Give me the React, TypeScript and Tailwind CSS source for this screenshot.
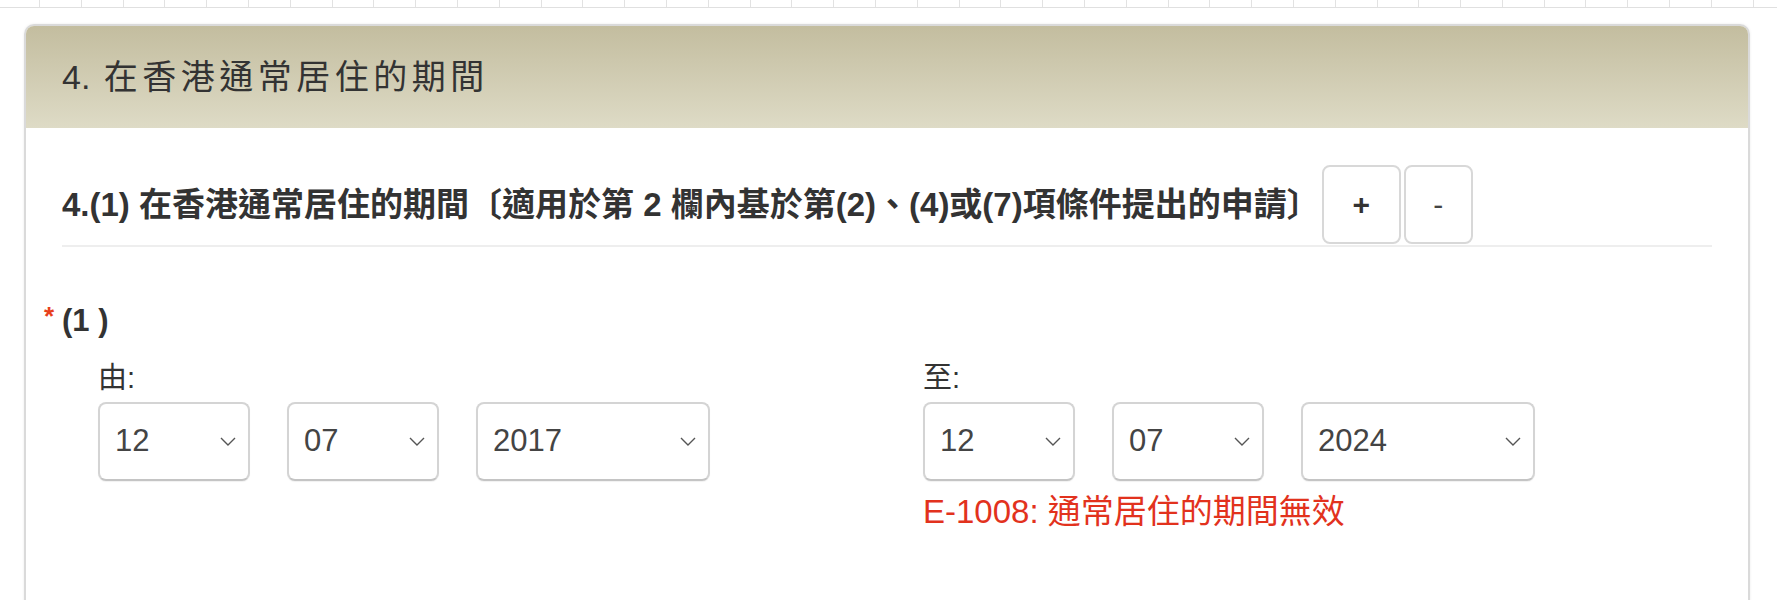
const FONT = "font-['Liberation_Sans','Noto_Sans_CJK_TC',sans-serif]";

interface DateSelectProps {
	value: string;
	width: string;
}

function DateSelect({ value, width }: DateSelectProps) {
	return (
		<div
			className={`${width} h-[79px] flex items-center justify-between pl-[15px] pr-[12px] border-2 border-[#d4d4d4] border-b-[#c4c4c4] rounded-[8px] bg-white shadow-[0_1px_1px_rgba(0,0,0,0.06)]`}
		>
			<span className="text-[31px] text-[#444]">{value}</span>
			<svg width="16" height="9" viewBox="0 0 16 9" className="text-[#555]">
				<path d="M1 1l7 7 7-7" fill="none" stroke="currentColor" strokeWidth="1.4" />
			</svg>
		</div>
	);
}

interface DateGroupProps {
	label: string;
	day: string;
	month: string;
	year: string;
	error?: string;
}

function DateGroup({ label, day, month, year, error }: DateGroupProps) {
	return (
		<div className="pl-[36px]">
			<div className="text-[29px] leading-[34px] text-[#333]">{label}</div>
			<div className="flex gap-[37px] mt-[7px]">
				<DateSelect value={day} width="w-[152px]" />
				<DateSelect value={month} width="w-[152px]" />
				<DateSelect value={year} width="w-[234px]" />
			</div>
			{error && (
				<p className="mt-[11px] text-[33px] leading-[40px] text-[#e2321d]">{error}</p>
			)}
		</div>
	);
}

export default function App() {
	// 頂部表格殘留的一行
	const cells = Array.from({ length: 43 }, (_, i) => i);

	return (
		<div className={`w-[1777px] h-[600px] overflow-hidden bg-white ${FONT}`}>
			<div className="flex h-[8px] border-b border-[#e0e0e0]">
				{cells.map((i) => (
					<div
						key={i}
						className={`flex-none h-full border-r border-[#e2e2e2] ${i === 0 ? "w-[40px]" : "w-[41.8px]"}`}
					/>
				))}
			</div>

			<div className="ml-[24px] mr-[27px] mt-[16px] rounded-t-[10px] border-2 border-b-0 border-[#dadada] shadow-[0_0_3px_rgba(0,0,0,0.08)] h-[600px]">
				{/* 標題列 */}
				<div className="h-[102px] flex items-center pl-[36px] pt-[1px] rounded-t-[8px] bg-gradient-to-b from-[#c3bd9f] to-[#dedbc6]">
					<h2 className="text-[34px] text-[#333]">
						4.&nbsp;<span className="ml-[4px] tracking-[4.5px]">在香港通常居住的期間</span>
					</h2>
				</div>

				{/* 內容 */}
				<div className="px-[36px]">
					<div className="flex items-center pt-[37px] pb-[1px] border-b-2 border-[#eeeeee]">
						<h3 className="font-bold text-[33px] text-[#333]">
							4.(1) 在香港通常居住的期間〔適用於第 2 欄內基於第(2)、(4)或(7)項條件提出的申請〕
						</h3>
						<div className="flex gap-[3px] ml-[2px]">
							<button className="w-[79px] h-[79px] border-2 border-[#d8d8d8] rounded-[8px] bg-white text-[30px] font-bold text-[#333]">
								+
							</button>
							<button className="w-[69px] h-[79px] border-2 border-[#d8d8d8] rounded-[8px] bg-white text-[30px] text-[#444]">
								-
							</button>
						</div>
					</div>

					<div className="mt-[56px] -ml-[18px] flex items-start leading-[36px]">
						<span className="w-[18px] text-[26px] leading-[26px] font-bold text-[#e8401c]">*</span>
						<span className="font-bold text-[31px] text-[#333]">(1 )</span>
					</div>

					<div className="grid grid-cols-2 mt-[22px]">
						<DateGroup label="由:" day="12" month="07" year="2017" />
						<DateGroup
							label="至:"
							day="12"
							month="07"
							year="2024"
							error="E-1008: 通常居住的期間無效"
						/>
					</div>
				</div>
			</div>
		</div>
	);
}
